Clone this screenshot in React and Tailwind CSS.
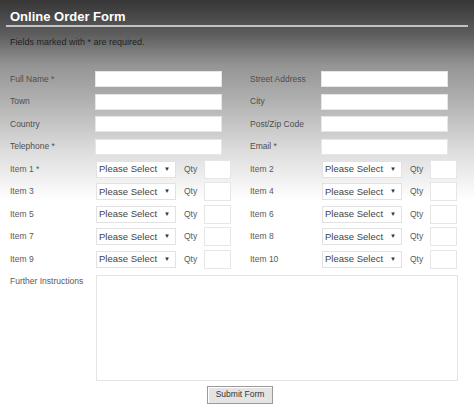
const font = { fontFamily: '"Liberation Sans", Arial, sans-serif' }

const textRows = [
  ['Full Name *', 'Street Address'],
  ['Town', 'City'],
  ['Country', 'Post/Zip Code'],
  ['Telephone *', 'Email *'],
]

const itemRows = [
  ['Item 1 *', 'Item 2'],
  ['Item 3', 'Item 4'],
  ['Item 5', 'Item 6'],
  ['Item 7', 'Item 8'],
  ['Item 9', 'Item 10'],
]

function TextField({ label, right }) {
  return (
    <div className={`flex items-center ${right ? 'w-[224px]' : 'w-[250px] pl-[10px]'}`}>
      <span className={`${right ? 'w-[71px]' : 'w-[85px]'} text-[8.5px] text-[#4e4e4e]`}>{label}</span>
      <input className="h-[16px] w-[127px] border border-[#e6e6e6] bg-white outline-none" />
    </div>
  )
}

function ItemField({ label, right }) {
  return (
    <div className={`flex items-center ${right ? 'w-[224px]' : 'w-[250px] pl-[10px]'}`}>
      <span className={`${right ? 'w-[72px]' : 'w-[86px]'} text-[8.5px] text-[#5a5a5a]`}>{label}</span>
      <div className="flex h-[17px] w-[80px] items-center justify-between border border-[#e2e2e2] bg-white pl-[2px] pr-[5px] text-[9.5px] text-[#444]">
        <span>Please Select</span>
        <span className="text-[6px] text-[#333]">▼</span>
      </div>
      <span className="ml-[8px] w-[20px] text-[8.5px] text-[#5a5a5a]">Qty</span>
      <input className="h-[19px] w-[27px] border border-[#e6e6e6] bg-white outline-none" />
    </div>
  )
}

export default function App() {
  return (
    <div
      style={font}
      className="h-[418px] w-[474px] overflow-hidden bg-[linear-gradient(to_bottom,#363636_0px,#5e5e5e_35px,#949494_65px,#b0b0b0_100px,#dcdcdc_150px,#ffffff_200px)]"
    >
      <div className="flex h-[25px] items-end pl-[10px] pb-[2px]">
        <h1 className="text-[13px] font-bold leading-none text-white">Online Order Form</h1>
      </div>
      <div className="mx-[6px] h-[2px] bg-[#c2c2c2]" />
      <p className="mt-[11px] pl-[10px] text-[9px] leading-none text-[#222]">
        Fields marked with * are required.
      </p>

      <div className="mt-[21px]">
        {textRows.map(([a, b]) => (
          <div key={a} className="flex h-[22.5px] items-center">
            <TextField label={a} />
            <TextField label={b} right />
          </div>
        ))}
        {itemRows.map(([a, b]) => (
          <div key={a} className="flex h-[22.5px] items-center">
            <ItemField label={a} />
            <ItemField label={b} right />
          </div>
        ))}
        <div className="flex pl-[10px]">
          <span className="w-[86px] pt-[4px] text-[8.5px] text-[#5a5a5a]">Further Instructions</span>
          <textarea className="mt-[4px] h-[106px] w-[362px] resize-none border border-[#e4e4e4] bg-white outline-none" />
        </div>
        <div className="mt-[5px] flex justify-center pl-[6px]">
          <button className="h-[18px] w-[66px] border border-[#9a9a9a] bg-[#e4e4e4] text-[8.5px] text-[#333] shadow-[inset_1px_1px_0_#fff]">
            Submit Form
          </button>
        </div>
      </div>
    </div>
  )
}
